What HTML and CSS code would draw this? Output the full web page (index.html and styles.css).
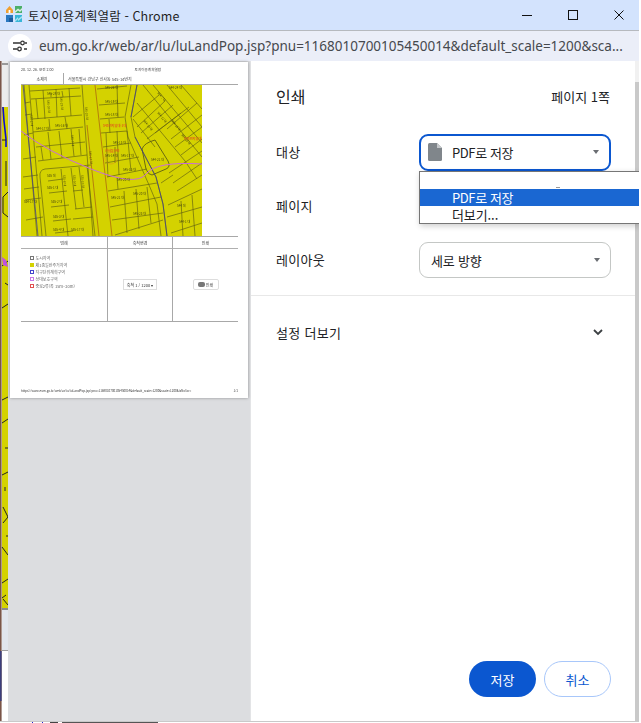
FILE: index.html
```html
<!DOCTYPE html>
<html lang="ko">
<head>
<meta charset="utf-8">
<title>토지이용계획열람 - Chrome</title>
<link rel="stylesheet" href="styles.css">
</head>
<body>
<div class="window">
  <header class="titlebar">
    <svg class="favicon" viewBox="0 0 16 16" width="16" height="16">
      <path d="M0 4 L3.5 0 L7 4 V7 H0Z" fill="#f0a030"/><rect x="2.6" y="4" width="1.8" height="3" fill="#fff"/>
      <path d="M9 0 H16 V7 H9Z" fill="#4caf6a"/><path d="M9 5 L12 2.5 L14 4 L16 2 V4 L14 6 L12 4.5 L9 7Z" fill="#d8efe0"/>
      <rect x="0" y="9" width="7" height="7" fill="#2a78c0"/><rect x="3" y="12" width="4" height="4" fill="#1b5c9c"/>
      <rect x="9" y="9" width="7" height="7" fill="#38b6d8"/><path d="M9 14 L12 11 V13 L16 10 V12 L12 15 V13 L9 16Z" fill="#a8e2f0"/>
    </svg>
    <span class="title">토지이용계획열람 - Chrome</span>
    <div class="winctl">
      <svg viewBox="0 0 10 10" width="10" height="10"><path d="M0 5.5H10" stroke="#111" fill="none"/></svg>
      <svg viewBox="0 0 10 10" width="10" height="10"><rect x=".5" y=".5" width="9" height="9" stroke="#111" fill="none"/></svg>
      <svg viewBox="0 0 10 10" width="10" height="10"><path d="M.5 .5L9.5 9.5M9.5 .5L.5 9.5" stroke="#111" fill="none"/></svg>
    </div>
  </header>
  <div class="addressbar">
    <span class="sitebtn">
      <svg viewBox="0 0 14 12" width="14" height="12"><path d="M0 3H7M11 9H14M0 9H4M12 3H14" stroke="#333" stroke-width="1.6" fill="none"/><circle cx="9.5" cy="3" r="1.8" fill="none" stroke="#333" stroke-width="1.3"/><circle cx="6.5" cy="9" r="1.8" fill="none" stroke="#333" stroke-width="1.3"/></svg>
    </span>
    <span class="url">eum.go.kr/web/ar/lu/luLandPop.jsp?pnu=1168010700105450014&amp;default_scale=1200&amp;sca...</span>
  </div>
  <main class="main">
    <section class="preview">
      <svg class="sliver" viewBox="0 0 8 660" width="8" height="660">
        <rect width="8" height="660" fill="#fff"/>
        <rect x="2" width="6" height="46" fill="#ececec"/>
        <rect x="2" y="2" width="6" height="2" fill="#9a9a9a"/>
        <rect x="2" y="46" width="6" height="501" fill="#d4d200"/>
        <rect x="2" y="547" width="6" height="2" fill="#8a8a8a"/>
        <rect x="2" y="549" width="6" height="40" fill="#e1e5ec"/>
        <rect x="2" y="589" width="6" height="1" fill="#a0a0a0"/>
        <rect x="0" width="1.6" height="660" fill="#7a5548"/>
        <rect x="0" y="590" width="1.6" height="50" fill="#3c3f7c"/>
        <path d="M3 46L4 60L6 78L6 86" stroke="#0a0ad0" stroke-width="1.6" fill="none"/>
        <path d="M2 79H6M6 100V125M8 131L3 136V152L8 156M2 205L8 200M5 222L8 224M2 247L8 243M2 339L8 336M2 362L8 358M5 387H8M2 414L8 411M5 426V430M3 446L8 456L3 462M6 475H8M2 486L8 494M2 522L8 518M2 537L6 534M3 538L8 544" stroke="#222" fill="none"/>
        <path d="M2 196L6 199L8 206L3 204Z" fill="#c050e0"/>
      </svg>
      <article class="sheet">
        <div class="sheet-top"><span>20. 12. 26. 오전 2:00</span><span class="sheet-top-title">토지이용계획열람</span></div>
        <div class="sketch-row"><span class="sketch-label">소재지</span><span class="sketch-addr">서울특별시 강남구 신사동 545-14번지</span></div>
        <svg class="map" viewBox="0 0 181 151" width="181" height="151" aria-label="지도">
          <rect width="181" height="151" fill="#d4d200"/>
          <g fill="none" stroke="#5f5f12" stroke-width=".65">
            <!-- upper-left blocks -->
            <path d="M9 6L59 3M10 14L60 11M11 34L61 30M12 47L62 42M15 62L64 57M17 76L66 70"/>
            <path d="M22 5L24 34M35 4L36 32M48 3L50 31M15 14L17 34M28 34L29 46M44 32L46 44M27 47L30 74M38 46L41 73M50 44L53 71M20 62L22 75M58 44L60 70"/>
            <path d="M30 8L30 12M41 6L42 12"/>
            <!-- far-left -->
            <path d="M4 18L9 17M4 30L11 29M3 50L12 48M2 74L15 72M2 92L17 90M4 115L20 113M5 135L22 132M3 104L18 102"/>
            <!-- lower-left blocks -->
            <path d="M24 84Q18 85 19 92L25 151M24 84L70 80M27 96L42 94M28 108L46 106M30 122L48 120M32 136L50 134M34 148L52 146"/>
            <path d="M40 84L47 151M50 83L55 124M58 82L63 122M66 81L74 151M52 106L62 105M54 124L71 122M52 134L72 132"/>
            <!-- centre blocks -->
            <path d="M76 4L106 1M78 20L104 18M79 34L103 32M80 48L106 46M82 62L110 58M84 78L118 72M86 92L126 84"/>
            <path d="M96 0L97 32M88 34L89 48M85 48L87 92M96 46L98 90M106 46L110 86M94 62L94 78"/>
            <path d="M87 106L136 98M89 122L140 112M91 135L142 128M94 150L142 135M103 106L106 148M115 104L118 144M126 102L130 138M96 92L97 104"/>
            <!-- right diagonal grid -->
            <path d="M122 0L181 72M132 0L181 58M146 0L181 42M160 0L181 24M116 18L164 76M112 34L134 62"/>
            <path d="M112 32L138 10M116 42L144 16M120 48L152 20M126 54L160 28M134 48L168 22M146 44L176 18M150 54L181 30M154 62L181 42M160 70L181 54"/>
            <path d="M148 88L181 66M152 98L181 78M156 106L181 90M140 98L152 90M164 76L176 94"/>
            <path d="M121 64Q123 58 134 55L147 76Q150 82 145 84L131 90Q127 90 125 84Z" stroke-width=".9"/>
            <path d="M147 120L181 104M146 132L181 122M150 148L181 138M160 116L162 151M171 110L174 151"/>
            <path d="M110 0L104 32L107 52L128 100L136 119L140 151M116 0L110 32L114 52L135 92L142 119L146 151"/>
            <path d="M61 0L72 151M3 0L16 151M8 0L21 151"/>
          </g>
          <path d="M74 0L91 151M66 40L78 151" fill="none" stroke="#a85a10" stroke-width=".7"/>
          <path d="M2 0L6 40L17 151M116 0L110 32M114 52L135 92L142 119L146 151" fill="none" stroke="#3838a0" stroke-width=".7"/>
          <path d="M0 46Q25 66 70 84T125 89T181 79" fill="none" stroke="#c86cd8" stroke-width="1"/>
          <circle cx="90" cy="73" r="6" fill="none" stroke="#e08a20" stroke-width=".5"/>
          <g class="lot-label">
            <text x="26" y="10">545-28 대</text><text x="15" y="45">544-17 대</text><text x="34" y="42">545-16 대</text><text x="64" y="22" transform="rotate(85 64 22)">545-20 대</text>
            <text x="84" y="4">545-26 대</text><text x="84" y="18">545-19 대</text><text x="84" y="31">545-18 대</text><text x="92" y="59">545-13 대</text><text x="84" y="72">545-14 대</text>
            <text x="100" y="72">545-17 대</text><text x="102" y="86">545-13 대</text><text x="96" y="96">545-20 대</text><text x="112" y="110">545-20 대</text><text x="90" y="114">545-21 대</text>
            <text x="112" y="130">545-23 대</text><text x="26" y="92">535 대</text><text x="26" y="104">535-1 대</text><text x="30" y="118">535-2 대</text><text x="32" y="133">535-3 대</text>
            <text x="32" y="146">535-4 대</text><text x="50" y="146">535-17 대</text><text x="130" y="76">544-21 대</text><text x="156" y="122">544 대</text><text x="158" y="138">544-1 대</text><text x="148" y="4">544-24 대</text>
            <text x="3" y="118">534-17 대</text><text x="68" y="66" transform="rotate(85 68 66)">545-17 대</text>
            <text x="42" y="90" transform="rotate(85 42 90)">535-8 대</text><text x="52" y="90" transform="rotate(85 52 90)">535-9 대</text><text x="60" y="90" transform="rotate(85 60 90)">535-10 대</text>
            <text x="9" y="30" transform="rotate(85 9 30)">534-2 대</text><text x="26" y="15" transform="rotate(85 26 15)">545-30 대</text><text x="39" y="12" transform="rotate(85 39 12)">545-29 대</text><text x="50" y="50" transform="rotate(85 50 50)">545-7 대</text>
            <text x="122" y="36" transform="rotate(50 122 36)">544-10 대</text><text x="136" y="28" transform="rotate(50 136 28)">544-12 대</text><text x="150" y="36" transform="rotate(50 150 36)">544-16 대</text><text x="160" y="50" transform="rotate(50 160 50)">544-18 대</text><text x="136" y="8" transform="rotate(50 136 8)">544-7 대</text>
          </g>
          <g class="lot-label-red"><text x="82" y="42">545번지일대-1대</text><text x="163" y="55">545번지일대</text><text x="84" y="67">신사동545</text></g>
        </svg>
        <div class="sheet-table">
          <div class="th">범례</div><div class="th">축척변경</div><div class="th">인쇄</div>
          <ul class="legend">
            <li><i class="sw sw-gray"></i>도시지역</li>
            <li><i class="sw sw-yellow"></i>제1종일반주거지역</li>
            <li><i class="sw sw-blue"></i>지구단위계획구역</li>
            <li><i class="sw sw-violet"></i>상대보호구역</li>
            <li><i class="sw sw-red"></i>중로2류(폭 15m~20m)</li>
          </ul>
          <div class="td"><span class="mini-select">축척 1 / 1200 ▾</span></div>
          <div class="td"><span class="mini-btn"><i class="mini-printer"></i>인쇄</span></div>
        </div>
        <div class="sheet-foot"><span>https://www.eum.go.kr/web/ar/lu/luLandPop.jsp?pnu=1168010700105450014&amp;default_scale=1200&amp;scale=1200&amp;isNoScr=</span><span>1/1</span></div>
      </article>
    </section>
    <section class="panel">
      <div class="panel-head"><h1>인쇄</h1><span>페이지 1쪽</span></div>
      <div class="row">
        <span>대상</span>
        <div class="select focused">
          <svg class="doc" viewBox="0 0 14 18" width="14" height="18"><path d="M1.5 0H9L14 5V16.5Q14 18 12.5 18H1.5Q0 18 0 16.5V1.5Q0 0 1.5 0Z" fill="#80868b"/><path d="M9 0L14 5H9Z" fill="#c4c7ca"/></svg>
          <span class="val">PDF로 저장</span><i class="caret"></i>
        </div>
      </div>
      <div class="row"><span>페이지</span><div class="select"><i class="caret"></i></div></div>
      <div class="row"><span>레이아웃</span><div class="select"><span class="val-plain">세로 방향</span><i class="caret"></i></div></div>
      <div class="more"><span>설정 더보기</span><svg viewBox="0 0 10 7" width="10" height="7"><path d="M1 1L5 5L9 1" fill="none" stroke="#3c4043" stroke-width="1.8"/></svg></div>
      <div class="actions"><button class="btn primary">저장</button><button class="btn ghost">취소</button></div>
    </section>
    <div class="gutter"></div>
    <div class="dropdown">
      <div class="dd-blank"><i class="dd-dash"></i></div>
      <div class="dd-item active">PDF로 저장</div>
      <div class="dd-item">더보기...</div>
    </div>
  </main>
  <div class="clip-strip"></div>
</div>
</body>
</html>
```
FILE: styles.css
```css
* { box-sizing: border-box; }
html, body { margin: 0; padding: 0; background: #fff; }
body { font-family: "Noto Sans CJK KR", "Noto Sans", sans-serif; color: #202124; }
.window { width: 639px; height: 723px; display: flex; flex-direction: column; overflow: hidden; }

.titlebar { height: 30px; flex: none; background: #d3e3fd; display: flex; align-items: center; padding-left: 6px; }
.favicon { flex: none; margin-top: -3px; }
.title { margin-left: 6px; font-size: 12.5px; color: #1f1f1f; letter-spacing: .1px; }
.winctl { margin-left: auto; display: flex; gap: 36px; padding-right: 15px; }

.addressbar { height: 31px; flex: none; background: #ebeef8; border-top: 1px solid #b6b9be; display: flex; align-items: center; padding-left: 8px; }
.sitebtn { width: 24px; height: 24px; border-radius: 50%; background: #fff; display: flex; align-items: center; justify-content: center; flex: none; }
.url { margin-left: 7px; font-family: "Noto Sans", sans-serif; font-size: 13.5px; color: #46494e; white-space: nowrap; }

.main { flex: 1; min-height: 0; display: flex; position: relative; }
.preview { width: 251px; flex: none; background: #dcdde0; display: flex; align-items: flex-start; border-right: 1px solid #e3e4e6; }
.sliver { flex: none; display: block; }

.sheet { width: 238px; height: 336px; margin: 1px 0 0 2px; background: #fff; box-shadow: 0 0 3px rgba(0,0,0,.35); padding: 4px 10px 0 11px; display: flex; flex-direction: column; color: #444; font-size: 3.6px; }
.sheet-top { height: 7px; display: flex; align-items: center; }
.sheet-top-title { margin-left: 81px; }
.sketch-row { height: 12px; display: flex; align-items: center; border-bottom: 1px solid #a8a8a8; font-size: 4px; }
.sketch-label { width: 43px; height: 12px; line-height: 12px; text-align: center; border-right: 1px solid #a8a8a8; }
.sketch-addr { margin-left: 4px; }
.map { display: block; flex: none; }
.lot-label { font-size: 3px; fill: #45450f; }
.lot-label-red { font-size: 3.2px; fill: #e0601a; font-weight: 700; }
.sheet-table { width: 217px; height: 86px; flex: none; display: grid; grid-template-columns: 87px 65px 65px; grid-template-rows: 12px 73px; border-top: 1px solid #a8a8a8; border-bottom: 1px solid #a8a8a8; font-size: 4px; }
.th, .td { display: flex; justify-content: center; }
.th { align-items: center; border-bottom: 1px solid #b0b0b0; }
.th:nth-child(-n+2), .legend, .td:nth-child(5) { border-right: 1px solid #a8a8a8; }
.legend { list-style: none; margin: 0; padding: 5px 0 0 9px; color: #666; }
.legend li { height: 7px; display: flex; align-items: center; gap: 1.5px; white-space: nowrap; }
.sw { width: 4px; height: 4px; border: .7px solid; display: block; flex: none; }
.sw-gray { border-color: #777; }
.sw-yellow { border-color: #d4d200; background: #d4d200; }
.sw-blue { border-color: #4444cc; }
.sw-violet { border-color: #c878e8; }
.sw-red { border-color: #e05050; }
.td { align-items: flex-start; padding-top: 30px; }
.mini-select { width: 34px; height: 11px; border: 1px solid #ddd; display: flex; align-items: center; justify-content: center; white-space: nowrap; color: #333; overflow: hidden; }
.mini-btn { width: 26px; height: 11px; border: 1px solid #ddd; border-radius: 2px; display: flex; align-items: center; justify-content: center; gap: 1px; color: #444; }
.mini-printer { width: 7px; height: 5px; background: #777; border-radius: 2px; display: block; }
.sheet-foot { margin-top: auto; height: 10px; display: flex; justify-content: space-between; align-items: center; font-size: 3px; color: #333; white-space: nowrap; margin-bottom: 2px; }
.sheet-table, .sheet-top, .sketch-row, .sheet-foot, .map { filter: blur(.25px); }

.panel { flex: 1; min-width: 0; background: #fff; display: flex; flex-direction: column; font-size: 13px; }
.panel-head { height: 73px; flex: none; display: flex; justify-content: space-between; align-items: center; padding: 0 25px 3px 25px; }
.panel-head h1 { margin: 0; font-size: 16px; font-weight: 400; }
.row { height: 36px; flex: none; margin-bottom: 18px; padding: 0 24px 0 25px; display: flex; align-items: center; justify-content: space-between; font-size: 13px; letter-spacing: .3px; }
.row > span { margin-top: -1px; }
.select { width: 192px; height: 36px; border: 1px solid #c4c7c5; border-radius: 9px; display: flex; align-items: center; position: relative; padding-left: 11px; font-size: 13px; letter-spacing: -.2px; }
.select.focused { border: 2px solid #0b57d0; height: 37px; padding-left: 7px; }
.doc { flex: none; }
.val { margin-left: 10px; letter-spacing: -.4px; }
.caret { position: absolute; right: 10px; top: 50%; margin-top: -2px; width: 0; height: 0; border-left: 3.5px solid transparent; border-right: 3.5px solid transparent; border-top: 4px solid #6a6d72; }
.more { flex: none; height: 74px; margin-top: -1px; border-top: 1px solid #e8e8e8; display: flex; align-items: center; justify-content: space-between; padding: 0 32px 0 25px; font-size: 13px; letter-spacing: .3px; }
.actions { margin-top: auto; padding: 0 24px 24px 0; display: flex; justify-content: flex-end; gap: 8px; }
.btn { width: 67px; height: 36px; border-radius: 18px; font-family: inherit; font-size: 13px; padding: 0; cursor: pointer; }
.primary { background: #0b57d0; color: #fff; border: 0; }
.ghost { background: #fff; color: #0b57d0; border: 1px solid #a8c7fa; }
.gutter { width: 4px; flex: none; background: linear-gradient(#f1f1f1 0, #f1f1f1 21px, #c9c9c9 21px); }

.dropdown { position: absolute; left: 419px; top: 110px; width: 220px; height: 53px; background: #fff; border: 1px solid #767676; border-right: 0; box-shadow: 1px 2px 6px rgba(0,0,0,.2); font-size: 13px; }
.dd-blank { height: 17px; position: relative; }
.dd-dash { position: absolute; left: 136px; top: 15px; width: 4px; height: 1px; background: #999; display: block; }
.dd-item { height: 17px; line-height: 17px; padding-left: 32px; color: #202124; letter-spacing: -.1px; }
.dd-item.active { background: #1a67d2; color: #fff; letter-spacing: -.4px; }

.clip-strip { height: 2px; flex: none; border-top: 1px solid #c9c9c9; background: linear-gradient(90deg, #fff 32px, #2222cc 32px, #2222cc 33px, #fff 33px, #fff 42px, #2222cc 42px, #2222cc 43px, #fff 43px, #fff 50px, #444 50px, #444 58px, #fff 58px, #fff 62px, #555 62px, #555 158px, #fff 158px); }
```
